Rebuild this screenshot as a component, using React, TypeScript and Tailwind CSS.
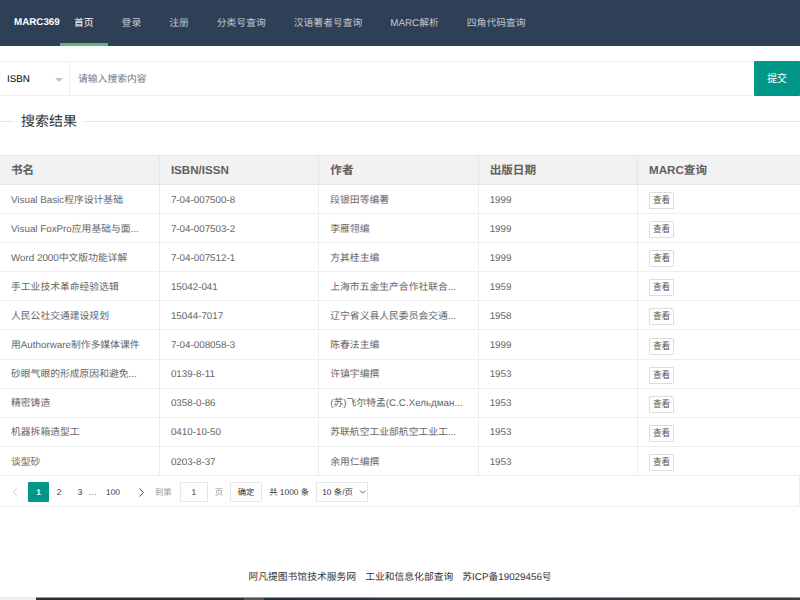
import { ChevronDown, ChevronLeft, ChevronRight } from 'lucide-react'

const navItems = ['首页', '登录', '注册', '分类号查询', '汉语著者号查询', 'MARC解析', '四角代码查询']

const books = [
  { title: 'Visual Basic程序设计基础', isbn: '7-04-007500-8', author: '段银田等编著', year: '1999' },
  { title: 'Visual FoxPro应用基础与面...', isbn: '7-04-007503-2', author: '李雁翎编', year: '1999' },
  { title: 'Word 2000中文版功能详解', isbn: '7-04-007512-1', author: '方其桂主编', year: '1999' },
  { title: '手工业技术革命经验选辑', isbn: '15042-041', author: '上海市五金生产合作社联合...', year: '1959' },
  { title: '人民公社交通建设规划', isbn: '15044-7017', author: '辽宁省义县人民委员会交通...', year: '1958' },
  { title: '用Authorware制作多媒体课件', isbn: '7-04-008058-3', author: '陈春法主编', year: '1999' },
  { title: '砂眼气眼的形成原因和避免...', isbn: '0139-8-11', author: '许镇宇编撰', year: '1953' },
  { title: '精密铸造', isbn: '0358-0-86', author: '(苏)飞尔特孟(C.C.Хельдман...', year: '1953' },
  { title: '机器拆箱造型工', isbn: '0410-10-50', author: '苏联航空工业部航空工业工...', year: '1953' },
  { title: '谈型砂', isbn: '0203-8-37', author: '余用仁编撰', year: '1953' },
]

const headers = ['书名', 'ISBN/ISSN', '作者', '出版日期', 'MARC查询']

export default function App() {
  return (
    <div className="h-[600px] overflow-hidden bg-white font-['Liberation_Sans','Noto_Sans_CJK_SC',sans-serif] text-[9.8px] text-[#666] [text-rendering:geometricPrecision]">
      {/* Header */}
      <div className="flex h-[46px] items-stretch bg-[#2f3f56]">
        <div className="flex w-[60px] items-center pl-[14px] pt-[1px] font-bold text-white">MARC369</div>
        {navItems.map((item, i) => (
          <div
            key={item}
            className={
              i === 0
                ? 'flex items-center border-b-[3px] border-[#5fb878] px-[14px] pt-[5px] text-white'
                : 'flex items-center border-b-[3px] border-transparent px-[14px] pt-[5px] text-[#c2c7ce]'
            }
          >
            {item}
          </div>
        ))}
      </div>

      {/* Search */}
      <div className="mt-[15px] flex h-[35px]">
        <div className="flex w-[70px] items-center justify-between border border-l-0 border-[#eee] pl-[7px] pr-[6px] pt-[3px] text-black">
          <span>ISBN</span>
          <span className="h-0 w-0 border-x-[4px] border-t-[4px] border-x-transparent border-t-[#c2c2c2]" />
        </div>
        <div className="flex flex-1 items-center border-y border-[#eee] pl-[8px] pt-[3px] text-[#757575]">请输入搜索内容</div>
        <button className="w-[46px] rounded-[1px] bg-[#009688] pt-[2px] text-white">提交</button>
      </div>

      {/* Section title */}
      <div className="mt-[15px] flex h-[21px] items-center">
        <div className="h-px w-[14px] bg-[#e6e6e6]" />
        <div className="px-[7px] text-[14px] leading-[21px] text-[#333]">搜索结果</div>
        <div className="h-px flex-1 bg-[#e6e6e6]" />
      </div>

      {/* Results */}
      <table className="mt-[23px] w-full table-fixed border-collapse">
        <thead>
          <tr className="h-[29px] border-y border-[#e6e6e6] bg-[#f2f2f2]">
            {headers.map((h, i) => (
              <th
                key={h}
                className={
                  i < 4
                    ? 'w-[159.4px] border-l border-[#e6e6e6] px-[11px] pt-[2px] text-left text-[11.6px] font-bold text-[#5f5f5f] first:border-l-0'
                    : 'border-l border-[#e6e6e6] px-[11px] pt-[2px] text-left text-[11.6px] font-bold text-[#5f5f5f]'
                }
              >
                {h}
              </th>
            ))}
          </tr>
        </thead>
        <tbody>
          {books.map((b) => (
            <tr key={b.isbn} className="h-[29.1px] border-b border-[#eee]">
              <td className="whitespace-nowrap px-[11px] pt-[4px]">{b.title}</td>
              <td className="whitespace-nowrap border-l border-[#eee] px-[11px] pt-[4px]">{b.isbn}</td>
              <td className="whitespace-nowrap border-l border-[#eee] px-[11px] pt-[4px]">{b.author}</td>
              <td className="whitespace-nowrap border-l border-[#eee] px-[11px] pt-[4px]">{b.year}</td>
              <td className="border-l border-[#eee] px-[11px]">
                <button className="mt-[3px] block h-[17px] w-[25px] rounded-[1px] border border-[#ddd] text-center text-[8.6px] leading-[15px] text-[#555]">
                  查看
                </button>
              </td>
            </tr>
          ))}
        </tbody>
      </table>

      {/* Pagination */}
      <div className="flex h-[31px] items-center border-b border-r border-[#eee] pt-[3px] text-[8.4px] text-[#333]">
        <ChevronLeft className="ml-[8px] h-[14px] w-[14px] text-[#c2c2c2]" strokeWidth={1.5} />
        <div className="ml-[6px] flex h-[20px] w-[21px] items-center justify-center rounded-[1px] bg-[#009688] font-bold text-white">1</div>
        <div className="ml-[7px] w-[6px] text-center">2</div>
        <div className="ml-[15px] w-[6px] text-center">3</div>
        <div className="ml-[5px] w-[9px] text-center text-[#666]">…</div>
        <div className="ml-[8px] w-[16px] text-center">100</div>
        <ChevronRight className="ml-[13px] h-[15px] w-[15px] text-[#333]" strokeWidth={1.5} />
        <div className="ml-[6px] text-[#999]">到第</div>
        <div className="ml-[8px] flex h-[20px] w-[28px] items-center justify-center rounded-[1px] border border-[#e6e6e6]">1</div>
        <div className="ml-[7px] text-[#999]">页</div>
        <div className="ml-[7px] flex h-[20px] w-[32px] items-center justify-center rounded-[1px] border border-[#e6e6e6]">确定</div>
        <div className="ml-[7px] whitespace-nowrap">共 1000 条</div>
        <div className="ml-[7px] flex h-[20px] w-[52px] items-center rounded-[1px] border border-[#e6e6e6] pl-[5px]">
          <span className="whitespace-nowrap">10 条/页</span>
          <ChevronDown className="ml-[5px] h-[10px] w-[10px]" strokeWidth={2} />
        </div>
      </div>

      {/* Footer */}
      <div className="mt-[64px] flex h-[15px] items-center justify-center gap-[9px] text-[#333]">
        <span>阿凡提图书馆技术服务网</span>
        <span>工业和信息化部查询</span>
        <span>苏ICP备19029456号</span>
      </div>

      {/* Dark strip cut off by the window */}
      <div className="mt-[11px] flex h-[3px]">
        <div className="w-[36px] bg-[#eee]" />
        <div className="w-[208px] border-t border-[#999] bg-[#2e2e2e]" />
        <div className="w-[20px] border-t border-[#999] bg-[#555]" />
        <div className="flex-1 border-t border-[#999] bg-gradient-to-r from-[#26303c] to-[#3d3a38]" />
      </div>
    </div>
  )
}
